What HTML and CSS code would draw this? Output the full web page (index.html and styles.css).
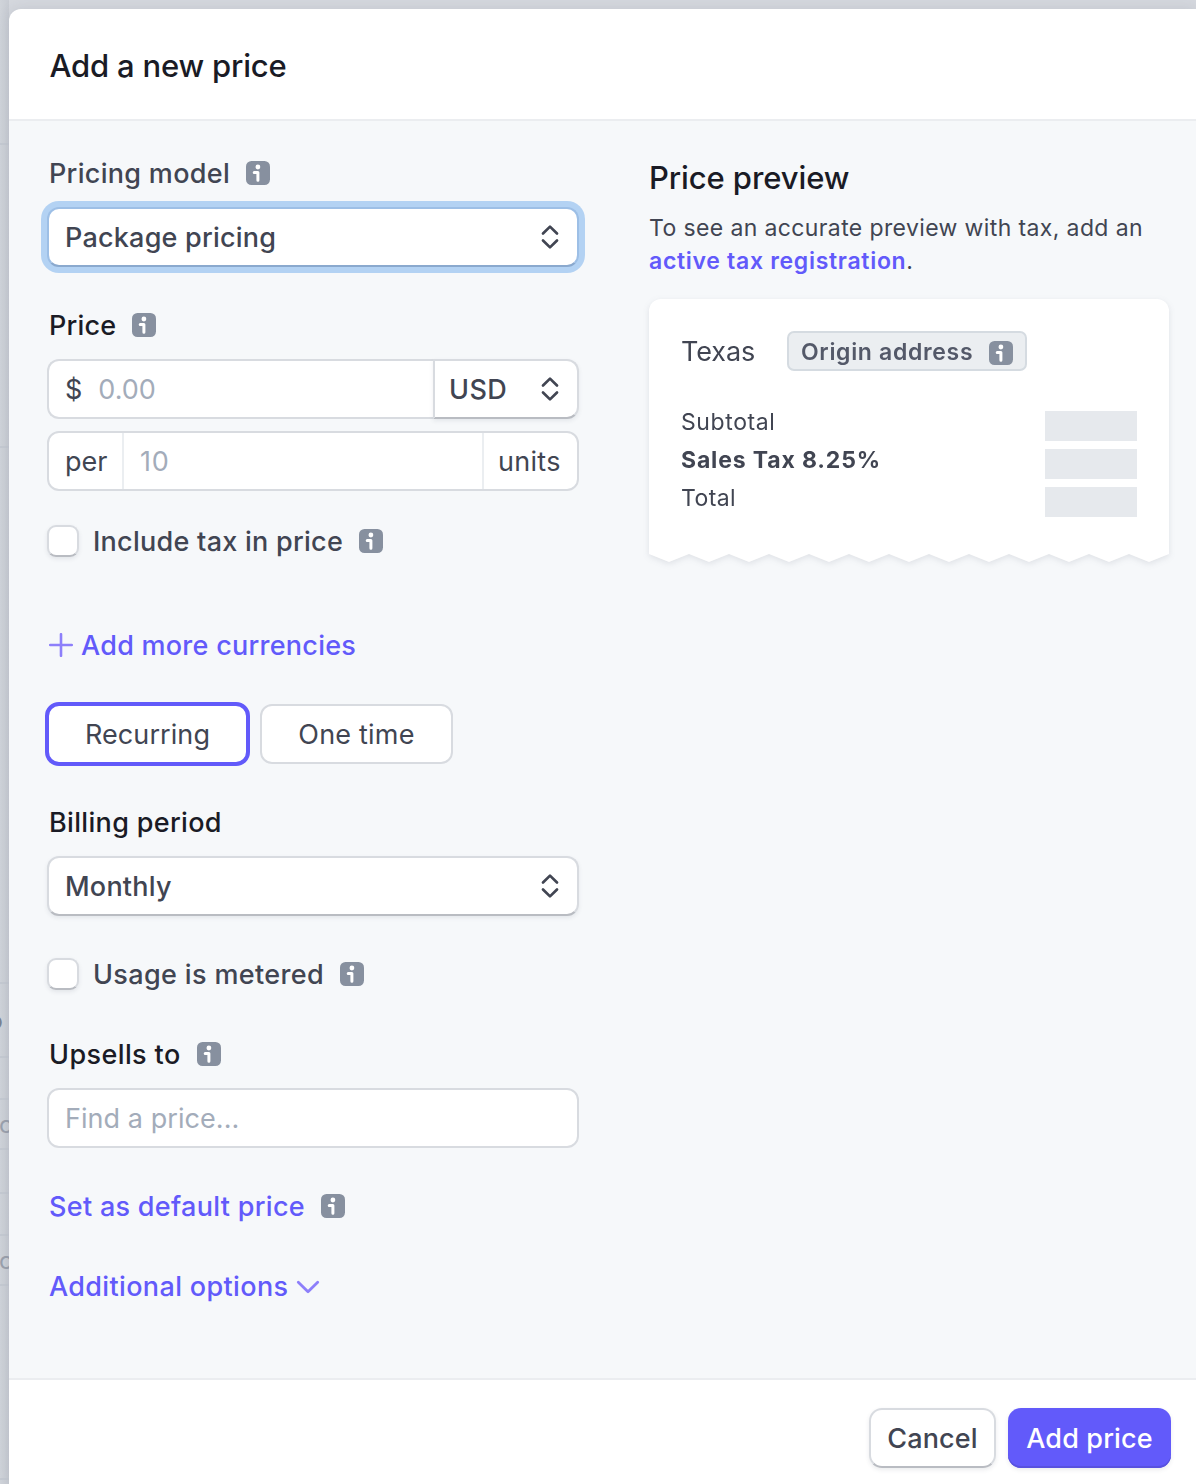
FILE: index.html
```html
<!DOCTYPE html>
<html lang="en">
<head>
<meta charset="utf-8">
<title>Add a new price</title>
<link rel="stylesheet" href="styles.css">
</head>
<body>
<svg class="sprite" aria-hidden="true">
  <symbol id="info" viewBox="0 0 24 24">
    <rect width="24" height="24" rx="5.5" fill="#87909f"/>
    <circle cx="11.9" cy="6" r="2.4" fill="#fff"/>
    <path d="M8.2 11.5h3.7v7.8" fill="none" stroke="#fff" stroke-width="3" stroke-linecap="round" stroke-linejoin="round"/>
  </symbol>
  <symbol id="updown" viewBox="0 0 20 26">
    <path d="M3 9.5 10 2.6l7 6.9M3 16.5l7 6.9 7-6.9" fill="none" stroke="#414552" stroke-width="2.7" stroke-linecap="round" stroke-linejoin="round"/>
  </symbol>
</svg>
<div class="page">
  <div class="backdrop" aria-hidden="true">
    <div class="line l1"></div>
    <div class="line l2"></div>
    <div class="line l3"></div>
    <div class="line l4"><span class="frag dark">o</span></div>
    <div class="line l5"></div>
    <div class="line l6"><span class="frag">c</span></div>
    <div class="line l7"></div>
    <div class="line l8"></div>
    <div class="line l9"><span class="frag">c</span></div>
    <div class="line l10"></div>
  </div>
  <section class="drawer">
    <header class="head"><h1 class="title">Add a new price</h1></header>
    <main class="body">
      <form class="form">
        <div class="label muted"><span class="t-model">Pricing model</span><svg class="info"><use href="#info"/></svg></div>
        <div class="box select focused"><span class="t-package">Package pricing</span><svg class="updown"><use href="#updown"/></svg></div>

        <div class="label gap-field"><span class="t-price">Price</span><svg class="info"><use href="#info"/></svg></div>
        <div class="joined">
          <div class="box amount"><span>$</span><span class="placeholder">0.00</span></div>
          <div class="box select currency"><span class="t-usd">USD</span><svg class="updown"><use href="#updown"/></svg></div>
        </div>
        <div class="box units">
          <div class="prefix"><span>per</span></div>
          <span class="placeholder quantity">10</span>
          <div class="suffix"><span class="t-units">units</span></div>
        </div>
        <div class="check tax"><i class="checkbox"></i><span class="t-include">Include tax in price</span><svg class="info"><use href="#info"/></svg></div>

        <div class="link more"><svg class="plus" viewBox="0 0 24 24"><path d="M12 1.2v21.6M1.2 12h21.6" stroke="#8d7ffa" stroke-width="2.6" stroke-linecap="round"/></svg><span class="t-more">Add more currencies</span></div>

        <div class="toggle">
          <div class="option selected"><span class="t-recurring">Recurring</span></div>
          <div class="option"><span class="t-once">One time</span></div>
        </div>

        <div class="label gap-billing"><span class="t-billing">Billing period</span></div>
        <div class="box select"><span class="t-monthly">Monthly</span><svg class="updown"><use href="#updown"/></svg></div>
        <div class="check metered"><i class="checkbox"></i><span class="t-usage">Usage is metered</span><svg class="info"><use href="#info"/></svg></div>

        <div class="label gap-upsell"><span class="t-upsells">Upsells to</span><svg class="info"><use href="#info"/></svg></div>
        <div class="box"><span class="placeholder t-find">Find a price...</span></div>

        <div class="link default"><span class="t-set">Set as default price</span><svg class="info"><use href="#info"/></svg></div>
        <div class="link additional"><span class="t-additional">Additional options</span><svg class="chevron" viewBox="0 0 24 16"><path d="M2.3 3.2 12 12.8l9.7-9.6" fill="none" stroke="#8d7ffa" stroke-width="2.8" stroke-linecap="round" stroke-linejoin="round"/></svg></div>
      </form>

      <aside class="preview">
        <h2 class="subtitle">Price preview</h2>
        <p class="note">To see an accurate preview with tax, add an<br><a class="t-active">active tax registration</a>.</p>
        <div class="receipt">
          <div class="paper">
            <div class="place"><span class="t-texas">Texas</span><div class="badge"><span class="t-origin">Origin address</span><svg class="info"><use href="#info"/></svg></div></div>
            <div class="row"><span class="t-sub">Subtotal</span><i class="skeleton"></i></div>
            <div class="row"><b class="t-sales">Sales Tax 8.25%</b><i class="skeleton"></i></div>
            <div class="row"><span class="t-total">Total</span><i class="skeleton"></i></div>
          </div>
          <svg class="teeth" viewBox="0 0 520 10"><path d="M0 0V1L20 9 40 1 60 9 80 1 100 9 120 1 140 9 160 1 180 9 200 1 220 9 240 1 260 9 280 1 300 9 320 1 340 9 360 1 380 9 400 1 420 9 440 1 460 9 480 1 500 9 520 1V0Z" fill="#fff"/></svg>
        </div>
      </aside>
    </main>
    <footer class="foot">
      <div class="btn cancel"><span class="t-cancel">Cancel</span></div>
      <div class="btn primary"><span class="t-add">Add price</span></div>
    </footer>
  </section>
</div>
</body>
</html>
```
FILE: styles.css
```css
* { box-sizing: border-box; }
body { margin: 0; font-family: Inter, "Liberation Sans", sans-serif; font-size: 27px; line-height: 40px; color: #414552; }
h1, h2, p { margin: 0; font-weight: 500; }
svg { display: block; flex: none; }
.sprite { width: 0; height: 0; position: absolute; }
span, b, a { white-space: nowrap; }
span, b { padding-top: 2px; }

.page { display: flex; height: 1484px; overflow: hidden; background: #d5d8de; }
.backdrop { width: 9px; flex: none; overflow: hidden; background: linear-gradient(90deg, #d0d4da, #c8ccd3); }
.line { border-bottom: 2px solid #c5cad2; display: flex; align-items: center; }
.l1 { height: 145px; }
.l2 { height: 303px; }
.l3 { height: 536px; }
.l4 { height: 74px; }
.l5 { height: 42px; }
.l6 { height: 50px; }
.l7 { height: 44px; }
.l8 { height: 42px; }
.l9 { height: 50px; }
.l10 { height: 194px; }
.frag { color: #9ba1ad; font-size: 24px; margin-left: -1px; }
.frag.dark { color: #7c8290; margin-left: -11.5px; }

.drawer { flex: 1; margin-top: 9px; display: flex; flex-direction: column; background: #fff; border-top-left-radius: 12px; overflow: hidden; box-shadow: 0 0 14px rgba(60, 66, 87, .12); }
.head { height: 112px; padding: 37px 0 0 40.5px; border-bottom: 2px solid #ebedf0; }
.title, .subtitle { color: #1a1b25; font-size: 31px; line-height: 40px; letter-spacing: -.2px; }
.body { flex: 1; display: flex; gap: 70px; padding: 32px 27px 0 38px; background: #f6f8fa; }
.form { width: 532px; flex: none; }
.preview { width: 520px; flex: none; }

.label { height: 40px; margin-bottom: 14px; padding-left: 2px; display: flex; align-items: center; gap: 16px; font-weight: 500; color: #1a1b25; }
.label.muted { color: #414552; }
.gap-field { margin-top: 38px; }
.gap-billing { margin-top: 36px; }
.gap-upsell { margin-top: 44px; }
.info { width: 24px; height: 24px; }
.updown { width: 20px; height: 26px; }

.box { height: 60px; padding: 0 17.5px 0 16px; display: flex; align-items: center; background: #fff; border: 2px solid #d8dbe0; border-radius: 12px; }
.select { justify-content: space-between; font-weight: 500; border-bottom-color: #b9bcc2; box-shadow: 0 2px 4px rgba(60, 66, 87, .09); }
.focused { border-color: #9dbfe6; border-bottom-color: #8aa9ce; box-shadow: 0 0 0 6px #b3d2f3; }
.placeholder { color: #a3acba; }
.joined { display: flex; }
.amount { flex: 1; gap: 16px; border-right: 0; border-radius: 12px 0 0 12px; }
.currency { width: 146px; padding-left: 14px; border-radius: 0 12px 12px 0; }
.units { margin-top: 12px; padding: 0; }
.prefix, .suffix { height: 56px; display: flex; align-items: center; }
.prefix { width: 75px; padding-left: 16px; border-right: 2px solid #ebeef1; }
.suffix { width: 95px; padding-left: 14px; border-left: 2px solid #ebeef1; }
.quantity { flex: 1; padding-left: 16px; letter-spacing: .8px; }

.check { height: 32px; display: flex; align-items: center; font-weight: 500; }
.check .info { margin-left: 16px; }
.checkbox { width: 32px; height: 32px; margin-right: 14px; background: #fff; border: 2px solid #d8dbe0; border-bottom-color: #b9bcc2; border-radius: 9px; box-shadow: 0 2px 4px rgba(60, 66, 87, .1); }
.tax { margin-top: 34px; }
.metered { margin-top: 42px; }

.link { height: 40px; padding-left: 2px; display: flex; align-items: center; font-weight: 500; color: #625afa; }
.more { margin-top: 68px; gap: 8px; }
.plus { width: 24px; height: 24px; }
.default { margin-top: 38px; gap: 16px; }
.additional { margin-top: 40px; gap: 8px; }
.chevron { width: 24px; height: 16px; margin-top: 2px; }

.toggle { height: 64px; margin: 37px 0 0 -2px; display: flex; align-items: center; gap: 10px; }
.option { width: 193px; height: 60px; display: flex; align-items: center; justify-content: center; background: #fff; border: 2px solid #d8dbe0; border-radius: 12px; }
.selected { width: 205px; height: 64px; border: 4px solid #625afa; border-radius: 14px; }

.subtitle { margin-top: 5px; letter-spacing: -.1px; }
.note { margin-top: 14px; font-size: 23px; line-height: 33px; font-weight: 400; letter-spacing: .38px; }
.note a { color: #625afa; font-weight: 600; }
.receipt { margin-top: 21px; filter: drop-shadow(0 2px 3px rgba(60, 66, 87, .12)); }
.paper { height: 255px; padding: 32px 32px 0; background: #fff; border-radius: 12px 12px 0 0; }
.teeth { width: 520px; height: 10px; margin-top: -1px; }
.place { height: 40px; margin-bottom: 31px; display: flex; align-items: center; }
.badge { width: 240px; height: 40px; margin-left: auto; margin-right: 110px; padding: 0 12px; display: flex; align-items: center; justify-content: space-between; background: #ebeef1; border: 2px solid #d5dbe1; border-radius: 7px; color: #545969; font-size: 23px; font-weight: 600; }
.badge .info { margin-top: 3px; }
.row { height: 38px; display: flex; align-items: center; justify-content: space-between; font-size: 23px; }
.skeleton { width: 92px; height: 30px; margin-top: 10px; background: #e6e9ed; }

.foot { height: 106px; padding: 28px 25px 0 0; display: flex; justify-content: flex-end; gap: 12px; border-top: 2px solid #ebedf0; font-weight: 500; }
.btn { height: 60px; display: flex; align-items: center; justify-content: center; border-radius: 13px; box-shadow: 0 2px 4px rgba(60, 66, 87, .1); }
.cancel { width: 127px; border: 2px solid #d8dbe0; border-bottom-color: #b9bcc2; }
.primary { width: 163px; background: #625afa; box-shadow: inset 0 -2px #5851df, 0 2px 4px rgba(60, 66, 87, .1); color: #fff; }

/* Tracking per text */
.t-model { letter-spacing: .3px; }
.t-package, .t-price, .t-monthly { letter-spacing: .22px; }
.t-usd { letter-spacing: .4px; }
.t-units { letter-spacing: .3px; }
.t-include { letter-spacing: .26px; }
.t-more { letter-spacing: .26px; }
.t-recurring { letter-spacing: .08px; }
.t-once { letter-spacing: .2px; }
.t-billing { letter-spacing: .33px; }
.t-usage { letter-spacing: .36px; }
.t-upsells { letter-spacing: .4px; }
.t-find { letter-spacing: .06px; }
.t-set { letter-spacing: .3px; }
.t-additional { letter-spacing: .35px; }
.note .t-active { letter-spacing: .7px; }
.t-texas { letter-spacing: -.1px; }
.t-origin { letter-spacing: .68px; }
.t-sub { letter-spacing: .6px; }
.t-sales { letter-spacing: .85px; }
.t-total { letter-spacing: .4px; }
.t-cancel, .t-add { letter-spacing: .15px; }
```
